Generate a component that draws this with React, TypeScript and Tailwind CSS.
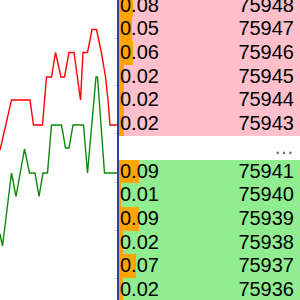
import React from "react";

const asks: [number, number, number][] = [
  [0.08, 75948, 14],
  [0.05, 75947, 12.5],
  [0.06, 75946, 13.5],
  [0.02, 75945, 4.5],
  [0.02, 75944, 4.5],
  [0.02, 75943, 4.5],
];
const bids: [number, number, number][] = [
  [0.09, 75941, 20],
  [0.01, 75940, 1.5],
  [0.09, 75939, 20],
  [0.02, 75938, 4],
  [0.07, 75937, 17],
  [0.02, 75936, 4],
];

function Row({ v, p, w, bg }: { v: number; p: number; w: number; bg: string }) {
  return (
    <div className={"relative flex h-[23.7px] items-center justify-between pl-[1px] pr-[6px] leading-[23.7px] " + bg}>
      <div className="absolute left-0 top-0 bottom-0 bg-[#ffa500]" style={{ width: w }} />
      <span className="relative">{v.toFixed(2)}</span>
      <span className="relative">{p}</span>
    </div>
  );
}

const red =
  "0,150 11.5,100 30,100 33.5,125 42.5,125 46.5,77 51.5,77 55.5,52.5 61,77 64.5,77 69,52.5 74,52.5 80.5,100 83,52.5 87.5,52.5 92,29.5 96.5,29.5 101.5,53 105.5,77 108,100 110,125 117,125";
const green =
  "0,234 2.5,246 11.5,173 16,196.5 24.5,149 29.5,173 35,173 39,196.5 43,173 47.5,173 51.5,125 61.5,125 65.5,148 69,148 73,125 83.5,125 87.5,173 96,77 97.5,77 104.5,173 117,173";

export default function App() {
  return (
    <div className="flex h-[300px] w-[300px] overflow-hidden bg-white font-['Liberation_Sans',Arial,sans-serif] text-[20px] text-black">
      <div className="w-[117px] shrink-0">
        <svg width="117" height="300" viewBox="0 0 117 300">
          <polyline points={red} fill="none" stroke="#ff0000" strokeWidth="1.4" />
          <polyline points={green} fill="none" stroke="#0a8a0a" strokeWidth="1.4" />
          {[38, 85, 133, 182, 230, 278].map((y) => (
            <rect key={y} x="114" y={y} width="3" height="1" fill="#c8cfe0" />
          ))}
        </svg>
      </div>
      <div className="w-[2px] shrink-0 bg-[#24449a]" />
      <div className="flex-1 overflow-hidden">
        <div className="mt-[-6.3px]">
          {asks.map(([v, p, w]) => (
            <Row key={p} v={v} p={p} w={w} bg="bg-[#ffc0cb]" />
          ))}
          <div className="flex h-[23.7px] items-center justify-end pr-[6px] leading-[23.7px] text-[#556070]">…</div>
          {bids.map(([v, p, w]) => (
            <Row key={p} v={v} p={p} w={w} bg="bg-[#90ee90]" />
          ))}
        </div>
      </div>
    </div>
  );
}
